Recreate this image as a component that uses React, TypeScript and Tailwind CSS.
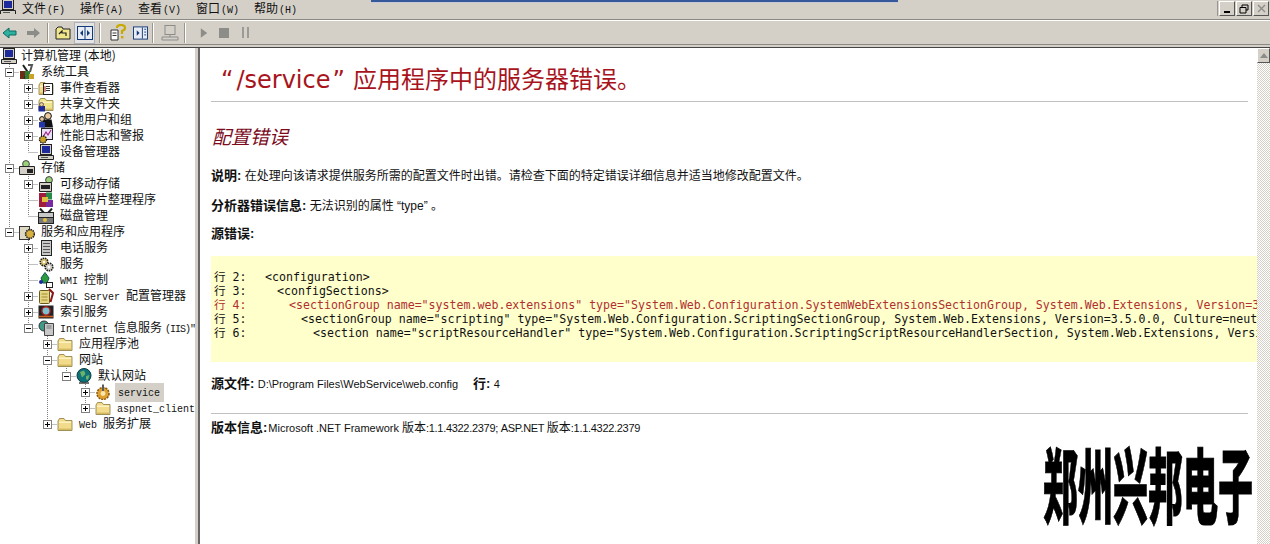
import React from "react";

const CJK = "font-['Noto_Sans_CJK_SC',sans-serif]";

function Icon({ kind }: { kind: string }) {
  const folder = (fill = "#f2dc8c") => (
    <>
      <path d="M1 5 L2.5 2.5 H7 L8.5 4.5 H15 V14.5 H1 Z" fill={fill} stroke="#8c7a3c" strokeWidth="0.8" />
      <path d="M2 6.2 H14" stroke="#fff8d0" strokeWidth="1.2" />
      <path d="M2 13.2 H14" stroke="#c8a850" strokeWidth="1" />
    </>
  );
  const computer = (
    <>
      <rect x="2.5" y="0.5" width="11" height="10" fill="#d4d0c8" stroke="#222" />
      <rect x="4" y="2" width="8" height="7" fill="#1c2a9c" />
      <path d="M0.5 11.5 H15.5 V15.5 H0.5 Z" fill="#d4d0c8" stroke="#222" />
      <path d="M3 13.5 H10" stroke="#555" />
    </>
  );
  const gears = (
    <>
      <circle cx="6" cy="6" r="3.8" fill="#d8c070" stroke="#222" strokeWidth="1.6" strokeDasharray="1.5 0.8" />
      <circle cx="11" cy="11" r="3.8" fill="#d4d0c8" stroke="#222" strokeWidth="1.6" strokeDasharray="1.5 0.8" />
      <circle cx="6" cy="6" r="1.2" fill="#fff" />
      <circle cx="11" cy="11" r="1.2" fill="#fff" />
    </>
  );
  const body: Record<string, React.ReactNode> = {
    computer,
    device: computer,
    tools: (
      <>
        <rect x="1" y="7" width="5" height="8" fill="#6b2d1a" />
        <path d="M4 1 L8 7 L6 15" stroke="#222" strokeWidth="2" fill="none" />
        <rect x="6" y="7" width="5" height="8" fill="#2f7d32" />
        <path d="M9 1 L13 1 L11 8" stroke="#555" strokeWidth="2" fill="none" />
        <rect x="10" y="10" width="5" height="5" fill="#c9a227" />
      </>
    ),
    event: (
      <>
        {folder()}
        <rect x="5.5" y="3.5" width="9" height="11" fill="#fff" stroke="#222" />
        <path d="M8 6.5 H12 M8 8.5 H12 M8 10.5 H12" stroke="#333" />
        <path d="M7 6 V12" stroke="#9a1c1c" />
      </>
    ),
    share: (
      <>
        {folder("#eee48a")}
        <path d="M0.5 10 H7 V15.5 H0.5 Z" fill="#1c2a9c" />
        <circle cx="3.5" cy="8.5" r="2" fill="#e9c9a0" stroke="#222" strokeWidth="0.6" />
      </>
    ),
    users: (
      <>
        <circle cx="10" cy="4" r="3.4" fill="#e9c9a0" stroke="#111" />
        <path d="M3 15.5 L5.5 7.5 H13.5 L15 15.5 Z" fill="#111" />
        <circle cx="4" cy="7" r="2.4" fill="#e9c9a0" stroke="#111" />
        <rect x="1" y="10" width="6" height="5.5" fill="#2536a8" />
      </>
    ),
    perf: (
      <>
        <rect x="3.5" y="0.5" width="11" height="11" fill="#e8e0f4" stroke="#222" />
        <path d="M5 9 L8 4 L10 7 L13 2" stroke="#a0208c" strokeWidth="1.2" fill="none" />
        <circle cx="5" cy="11.5" r="3.5" fill="#c9a227" stroke="#222" strokeWidth="1.4" strokeDasharray="1.5 0.8" />
      </>
    ),
    storage: (
      <>
        <circle cx="7" cy="4" r="3.4" fill="#9ad07a" stroke="#444" />
        <path d="M0.5 6.5 H15.5 V14.5 H0.5 Z" fill="#d4d0c8" stroke="#222" />
        <rect x="8" y="9" width="6" height="4" fill="#222" />
      </>
    ),
    removable: (
      <>
        <circle cx="11" cy="4" r="3.4" fill="#9ad07a" stroke="#444" />
        <path d="M1.5 6.5 H13.5 V15.5 H1.5 Z" fill="#d4d0c8" stroke="#222" />
        <rect x="3" y="9" width="9" height="4" fill="#222" />
      </>
    ),
    defrag: (
      <>
        <rect x="1" y="1" width="7" height="14" fill="#a01c3c" />
        <rect x="8" y="0.5" width="6" height="7" fill="#2a8a4a" />
        <rect x="8" y="8" width="7" height="7" fill="#7a2aa0" />
        <rect x="4" y="5" width="6" height="5" fill="#e0c040" />
      </>
    ),
    disk: (
      <>
        <path d="M2 0.5 L6 5 M14 0.5 L10 5" stroke="#222" strokeWidth="2" />
        <rect x="0.5" y="4.5" width="15" height="5" fill="#c8c8c8" stroke="#222" />
        <rect x="0.5" y="9.5" width="15" height="6" fill="#7a7a7a" stroke="#222" />
        <circle cx="7" cy="12" r="2" fill="#e0c040" />
      </>
    ),
    services: (
      <>
        <rect x="0.5" y="2.5" width="10" height="13" fill="#ded9c4" stroke="#333" />
        <circle cx="11" cy="10" r="4.4" fill="#d8b040" stroke="#222" strokeWidth="1.6" strokeDasharray="1.5 0.8" />
      </>
    ),
    phone: (
      <>
        <rect x="3.5" y="0.5" width="10" height="15" fill="#c8c8c8" stroke="#222" />
        <path d="M5 3.5 H12 M5 6.5 H12 M5 9.5 H12 M5 12.5 H12" stroke="#555" />
      </>
    ),
    gears,
    wmi: (
      <>
        <path d="M3 6 L7 0.5 L11 6 L9 11 H5 Z" fill="#2e9a3e" stroke="#155" />
        <rect x="8.5" y="10.5" width="6" height="5" fill="#fff" stroke="#222" />
        <circle cx="3" cy="10" r="2" fill="#1c2a9c" />
      </>
    ),
    sql: (
      <>
        <rect x="1.5" y="2.5" width="10" height="13" rx="1" fill="#e6d684" stroke="#6a5a20" />
        <path d="M3.5 6 H9.5 M3.5 9 H9.5 M3.5 12 H9.5" stroke="#a08a30" />
        <path d="M11 1 L15 5 L12.5 14" stroke="#8a1414" strokeWidth="2" fill="none" />
      </>
    ),
    index: (
      <>
        <rect x="0.5" y="1.5" width="15" height="13" fill="#222" />
        <circle cx="8" cy="7" r="4.2" fill="#7ac0d0" stroke="#a01c1c" strokeWidth="1.5" />
        <path d="M1 12.5 H15" stroke="#d06020" strokeWidth="1.6" />
      </>
    ),
    iis: (
      <>
        <circle cx="6" cy="6" r="5" fill="#3f9a8a" stroke="#333" />
        <path d="M6.5 3.5 H15.5 V15.5 H6.5 Z" fill="#c8c8c8" stroke="#444" />
        <path d="M8.5 6 H13.5 M8.5 8 H13.5" stroke="#777" />
      </>
    ),
    folder: folder(),
    globe: (
      <>
        <circle cx="8" cy="7.5" r="7" fill="#0e7278" stroke="#0b3b3f" />
        <path d="M4 4 L8 2.5 L9.5 6 L6 9.5 Z M10 8 L13.5 7 L12 12 L10 11 Z" fill="#6fb26a" />
        <path d="M3 15 H13" stroke="#444" strokeWidth="1.5" />
      </>
    ),
    service: (
      <>
        <circle cx="8" cy="9.5" r="6" fill="#e0a030" stroke="#8a5a10" strokeWidth="1.6" strokeDasharray="2 1" />
        <circle cx="8" cy="9.5" r="2.4" fill="#f8e8b0" />
        <rect x="7" y="0.5" width="2" height="6.5" fill="#5a5a5a" />
      </>
    ),
  };
  return (
    <svg width="16" height="16" viewBox="0 0 16 16" className="shrink-0">
      {body[kind]}
    </svg>
  );
}

/* one 19px tree column: guide line, connector, or expand box */
function Cell({ type, box }: { type: "guide" | "blank" | "mid" | "end"; box?: "+" | "-" }) {
  const dot = { stroke: "#808080", strokeDasharray: "1 1", strokeWidth: 1 };
  return (
    <svg width="19" height="16" viewBox="0 0 19 16" className="shrink-0">
      {type !== "blank" && <line x1="9.5" y1="0" x2="9.5" y2={type === "end" ? 8 : 16} {...dot} />}
      {(type === "mid" || type === "end") && <line x1="9.5" y1="8.5" x2="19" y2="8.5" {...dot} />}
      {box && (
        <>
          <rect x="5.5" y="4.5" width="8" height="8" fill="#fff" stroke="#808080" />
          <line x1="7" y1="8.5" x2="12" y2="8.5" stroke="#000" />
          {box === "+" && <line x1="9.5" y1="6" x2="9.5" y2="11" stroke="#000" />}
        </>
      )}
    </svg>
  );
}

type Guide = "guide" | "blank" | "mid" | "end";
type Node = { g: Guide[]; box?: "+" | "-"; icon: string; label: React.ReactNode; sel?: boolean };
const M = ({ children }: { children: React.ReactNode }) => (
  <span className="whitespace-pre font-['Liberation_Mono',monospace] text-[10px]">{children}</span>
);

const tree: Node[] = [
  { g: ["mid"], box: "-", icon: "tools", label: "系统工具" },
  { g: ["guide", "mid"], box: "+", icon: "event", label: "事件查看器" },
  { g: ["guide", "mid"], box: "+", icon: "share", label: "共享文件夹" },
  { g: ["guide", "mid"], box: "+", icon: "users", label: "本地用户和组" },
  { g: ["guide", "mid"], box: "+", icon: "perf", label: "性能日志和警报" },
  { g: ["guide", "end"], icon: "device", label: "设备管理器" },
  { g: ["mid"], box: "-", icon: "storage", label: "存储" },
  { g: ["guide", "mid"], box: "+", icon: "removable", label: "可移动存储" },
  { g: ["guide", "mid"], icon: "defrag", label: "磁盘碎片整理程序" },
  { g: ["guide", "end"], icon: "disk", label: "磁盘管理" },
  { g: ["end"], box: "-", icon: "services", label: "服务和应用程序" },
  { g: ["blank", "mid"], box: "+", icon: "phone", label: "电话服务" },
  { g: ["blank", "mid"], icon: "gears", label: "服务" },
  { g: ["blank", "mid"], icon: "wmi", label: <><M>WMI </M>控制</> },
  { g: ["blank", "mid"], box: "+", icon: "sql", label: <><M>SQL Server </M>配置管理器</> },
  { g: ["blank", "mid"], box: "+", icon: "index", label: "索引服务" },
  {
    g: ["blank", "end"],
    box: "-",
    icon: "iis",
    label: (
      <>
        <M>Internet </M>信息服务
        <span className="ml-[3px] tracking-[-1px]">
          <M>(IIS)"</M>
        </span>
      </>
    ),
  },
  { g: ["blank", "blank", "mid"], box: "+", icon: "folder", label: "应用程序池" },
  { g: ["blank", "blank", "mid"], box: "-", icon: "folder", label: "网站" },
  { g: ["blank", "blank", "guide", "end"], box: "-", icon: "globe", label: "默认网站" },
  { g: ["blank", "blank", "guide", "blank", "mid"], box: "+", icon: "service", label: <M>service</M>, sel: true },
  { g: ["blank", "blank", "guide", "blank", "end"], box: "+", icon: "folder", label: <M>aspnet_client</M> },
  { g: ["blank", "blank", "end"], box: "+", icon: "folder", label: <><M>Web </M>服务扩展</> },
];

function Tree() {
  return (
    <div className={`w-[195px] shrink-0 overflow-hidden bg-white text-[12px] leading-4 text-[#111] ${CJK}`}>
      <div className="flex h-4 items-center whitespace-nowrap pl-[1px]">
        <Icon kind="computer" />
        <span className="ml-[4px] -translate-y-px">计算机管理 (本地)</span>
      </div>
      {tree.map((n, i) => (
        <div key={i} className="flex h-4 items-center whitespace-nowrap">
          {n.g.map((t, j) => (
            <Cell key={j} type={t} box={j === n.g.length - 1 ? n.box : undefined} />
          ))}
          <Icon kind={n.icon} />
          <span
            className={
              n.sel
                ? "ml-[4px] bg-[#d4d0c8] pl-[3px] pr-[4px]"
                : typeof n.label === "string"
                  ? "ml-[6px] -translate-y-px"
                  : "ml-[6px]"
            }
          >
            {n.label}
          </span>
        </div>
      ))}
    </div>
  );
}

function ToolSep() {
  return <div className="mx-[4px] h-[20px] w-[2px] shrink-0 border-l border-r border-l-[#9a968e] border-r-white" />;
}

function Toolbar() {
  return (
    <div className="flex h-[24px] items-center border-t border-white border-b-white bg-[#d4d0c8] pl-[2px]">
      <svg width="16" height="16" viewBox="0 0 16 16" className="shrink-0">
        <path d="M1 8 L7 3 V6 H14 V10 H7 V13 Z" fill="#2fb0a0" stroke="#0a6a60" />
      </svg>
      <svg width="16" height="16" viewBox="0 0 16 16" className="ml-[7px] shrink-0">
        <path d="M15 8 L9 3 V6 H2 V10 H9 V13 Z" fill="#8c8c88" />
      </svg>
      <div className="w-[2px]" />
      <ToolSep />
      <svg width="16" height="16" viewBox="0 0 16 16" className="ml-[2px] shrink-0">
        <path d="M1 4 L3 2 H7 L8 4 H15 V14 H1 Z" fill="#f0e68c" stroke="#222" />
        <path d="M4 9 L7 6 V8 H11 V11" fill="none" stroke="#222" strokeWidth="1.2" />
      </svg>
      <div className="ml-[3px] flex h-[22px] w-[21px] shrink-0 items-center justify-center border border-[#b0b0b8] bg-[#e4e4e4]">
        <svg width="16" height="14" viewBox="0 0 16 14">
          <rect x="0.5" y="0.5" width="15" height="13" fill="#e8ecf4" stroke="#123a7a" />
          <path d="M8 1 V13" stroke="#123a7a" />
          <path d="M6 4 L3 7 L6 10 Z M10 4 L13 7 L10 10 Z" fill="#123a7a" />
        </svg>
      </div>
      <ToolSep />
      <svg width="18" height="18" viewBox="0 0 18 18" className="ml-[4px] shrink-0">
        <path d="M2 6 H9 V16 H2 Z" fill="#fff" stroke="#333" />
        <path d="M3.5 9 H7.5 M3.5 11.5 H7.5" stroke="#333" />
        <path d="M8 4 Q8 1 12 1 Q16 1 16 4 Q16 6 13 7 V10" fill="none" stroke="#c9a900" strokeWidth="2.2" />
        <rect x="12" y="12" width="2.4" height="2.4" fill="#c9a900" />
      </svg>
      <svg width="15" height="14" viewBox="0 0 16 14" className="ml-[6px] shrink-0">
        <rect x="0.5" y="0.5" width="15" height="13" fill="#e8ecf4" stroke="#123a7a" />
        <path d="M10 1 V13" stroke="#123a7a" />
        <path d="M4 4 L7 7 L4 10 Z" fill="#123a7a" />
        <path d="M12 3 H14 M12 6 H14 M12 9 H14" stroke="#123a7a" />
      </svg>
      <ToolSep />
      <svg width="18" height="18" viewBox="0 0 18 18" className="ml-[3px] shrink-0">
        <rect x="4" y="1.5" width="10" height="9" fill="#d4d0c8" stroke="#8c8c88" />
        <path d="M1 13 H17 V16 H1 Z" fill="#d4d0c8" stroke="#8c8c88" />
        <path d="M9 11 V13" stroke="#8c8c88" />
      </svg>
      <div className="w-[1px]" />
      <ToolSep />
      <svg width="8" height="12" viewBox="0 0 10 12" className="ml-[10px] shrink-0">
        <path d="M1 0 L9 6 L1 12 Z" fill="#8c8c88" />
      </svg>
      <div className="ml-[11px] h-[10px] w-[10px] shrink-0 bg-[#8c8c88]" />
      <div className="ml-[13px] flex shrink-0 gap-[3px]">
        <div className="h-[11px] w-[2px] bg-[#9a9a96]" />
        <div className="h-[11px] w-[2px] bg-[#9a9a96]" />
      </div>
    </div>
  );
}

const code: { n: number; pad: string; text: string; red?: boolean }[] = [
  { n: 2, pad: "pl-0", text: "<configuration>" },
  { n: 3, pad: "pl-[12px]", text: "<configSections>" },
  { n: 4, pad: "pl-[24px]", red: true, text: '<sectionGroup name="system.web.extensions" type="System.Web.Configuration.SystemWebExtensionsSectionGroup, System.Web.Extensions, Version=3.5.0.0' },
  { n: 5, pad: "pl-[36px]", text: '<sectionGroup name="scripting" type="System.Web.Configuration.ScriptingSectionGroup, System.Web.Extensions, Version=3.5.0.0, Culture=neutral' },
  { n: 6, pad: "pl-[48px]", text: '<section name="scriptResourceHandler" type="System.Web.Configuration.ScriptingScriptResourceHandlerSection, System.Web.Extensions, Version=3.5' },
];

const bodyFont = "font-['Liberation_Sans','Noto_Sans_CJK_SC',sans-serif]";

function Page() {
  return (
    <div className={`min-w-0 flex-1 overflow-hidden bg-white pl-[11px] text-[12px] text-[#111] ${bodyFont}`}>
      <h1 className="ml-[10px] mt-[14px] h-8 whitespace-nowrap text-[24px] font-normal leading-8 text-[#a8141c] font-['DejaVu_Sans','Noto_Sans_CJK_SC',sans-serif]">
        <span className="mr-[3px]">“</span>/service<span className="ml-[2px]">”</span>
        <span className={`ml-[8px] ${CJK}`}>应用程序中的服务器错误。</span>
      </h1>
      <div className="mr-[9px] mt-[7px] h-px bg-[#c0c0c0]" />
      <h2 className={`ml-[1px] mt-[22px] h-6 text-[19px] font-normal italic leading-6 text-[#7a0a1c] ${CJK}`}>配置错误</h2>
      <p className="mt-[20px] h-4 whitespace-nowrap leading-4">
        <b className="text-[13px]">说明:</b> 在处理向该请求提供服务所需的配置文件时出错。请检查下面的特定错误详细信息并适当地修改配置文件。
      </p>
      <p className="mt-[14px] h-4 whitespace-nowrap leading-4">
        <b className="text-[13px]">分析器错误信息:</b> 无法识别的属性 “type” 。
      </p>
      <p className="mt-[12px] h-4 leading-4">
        <b className="text-[13px]">源错误:</b>
      </p>
      <div className="mt-[14px] h-[106px] overflow-hidden bg-[#ffffcc] pl-[3px] pt-[14px] font-['DejaVu_Sans_Mono','Noto_Sans_CJK_SC',monospace] text-[11.6px] leading-[14px]">
        {code.map((l) => (
          <div key={l.n} className={`flex h-[14px] whitespace-pre ${l.red ? "text-[#b03030]" : ""}`}>
            <span className="w-[51px] shrink-0">行 {l.n}:</span>
            <span className={l.pad}>{l.text}</span>
          </div>
        ))}
      </div>
      <p className="mt-[14px] h-4 whitespace-nowrap leading-4">
        <b className="text-[13px]">源文件:</b>{" "}
        <span className="text-[11px]">D:\Program Files\WebService\web.config</span>
        <b className="ml-[15px] text-[13px]">行:</b> <span className="text-[11px]">4</span>
      </p>
      <div className="mr-[9px] mt-[21px] h-px bg-[#c0c0c0]" />
      <p className="mt-[6px] h-4 whitespace-nowrap leading-4">
        <b className="text-[13px]">版本信息:</b>
        <span className="ml-[1px] text-[11px]">Microsoft .NET Framework </span>版本
        <span className="text-[11px] tracking-[-0.3px]">:1.1.4322.2379; ASP.NET </span>版本
        <span className="text-[11px] tracking-[-0.3px]">:1.1.4322.2379</span>
      </p>
    </div>
  );
}

function Scrollbar() {
  return (
    <div className="w-[13px] shrink-0 bg-[repeating-conic-gradient(#d4d0c8_0_25%,#ffffff_0_50%)] bg-[length:2px_2px]">
      <div className="flex h-[15px] items-center justify-center border border-b-[#555] border-r-[#555] border-l-white border-t-white bg-[#d4d0c8]">
        <svg width="8" height="5" viewBox="0 0 8 5"><path d="M4 0 L8 5 H0 Z" fill="#8c8c88" /></svg>
      </div>
    </div>
  );
}

function WinBtn({ children }: { children: React.ReactNode }) {
  return (
    <div className="flex h-[15px] w-[16px] shrink-0 items-center justify-center border border-b-[#555] border-r-[#555] border-l-white border-t-white bg-[#d4d0c8]">
      {children}
    </div>
  );
}

export default function App() {
  return (
    <div className={`relative flex h-[544px] w-[1270px] flex-col overflow-hidden bg-[#d4d0c8] ${CJK}`}>
      <div className="flex h-[19px] items-center text-[12px] text-[#111]">
        <div className="h-[15px] w-[22px] shrink-0 -translate-y-[3px] overflow-hidden">
          <Icon kind="computer" />
        </div>
        {["文件", "操作", "查看", "窗口", "帮助"].map((m, i) => (
          <span key={m} className="w-[58px] shrink-0 -translate-y-px whitespace-nowrap">
            {m}
            <span className="ml-[1px] font-['Liberation_Mono',monospace] text-[10px]">({"FAVWH"[i]})</span>
          </span>
        ))}
        <div className="ml-auto mr-[1px] flex -translate-y-[1px] gap-[1px] border-l border-[#9a968e] pl-[1px]">
          <WinBtn>
            <div className="mt-[7px] h-[2px] w-[6px] bg-black" />
          </WinBtn>
          <WinBtn>
            <svg width="10" height="10" viewBox="0 0 10 10">
              <path d="M3 3 V1 H9 V6 H7 M1 3.5 H7 V9 H1 Z" fill="none" stroke="#000" />
            </svg>
          </WinBtn>
          <WinBtn>
            <svg width="9" height="9" viewBox="0 0 9 9">
              <path d="M1 1 L8 8 M8 1 L1 8" stroke="#8c8c88" strokeWidth="1.4" />
            </svg>
          </WinBtn>
        </div>
      </div>
      <div className="h-px bg-[#8c8984]" />
      <Toolbar />
      <div className="h-[4px] border-b border-t border-b-[#444] border-t-[#8c8984] bg-[#d4d0c8]" />
      <div className="flex min-h-0 flex-1">
        <Tree />
        <div className="w-[5px] shrink-0 border-r-2 border-r-[#666] bg-[#d4d0c8]" />
        <Page />
        <Scrollbar />
      </div>
      <div className="absolute left-[371px] top-0 h-[3px] w-[527px] border-b border-[#c8c8d8] bg-[#34589a]" />
      <div className="absolute left-[1043px] top-[423px] origin-top-left scale-y-[2.35] whitespace-nowrap text-[35px] font-black leading-[50px] text-black [-webkit-text-stroke:0.4px_#000]">
        郑州兴邦电子
      </div>
    </div>
  );
}
